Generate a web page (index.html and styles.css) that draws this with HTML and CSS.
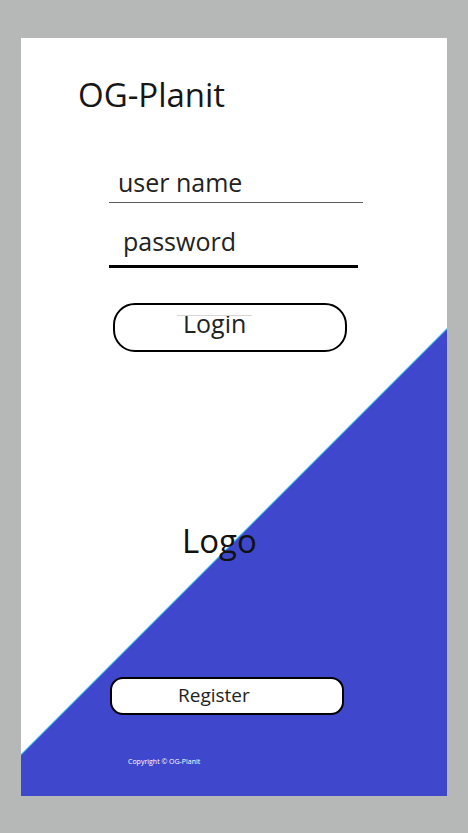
FILE: index.html
```html
<!DOCTYPE html>
<html>
<head>
<meta charset="utf-8">
<link rel="stylesheet" href="styles.css">
</head>
<body>
<div class="card">
  <div class="edge"></div>
  <div class="wedge"></div>
  <div class="content">
    <h1 class="title">OG-Planit</h1>
    <div class="field field-user">user name</div>
    <div class="field field-pass">password</div>
    <button class="btn btn-login"><span class="btn-label">Login</span></button>
    <div class="logo">Logo</div>
    <button class="btn btn-register"><span>Register</span></button>
    <div class="footer">Copyright &copy; OG-Planit</div>
  </div>
</div>
</body>
</html>
```
FILE: styles.css
```css
html, body {
  margin: 0;
  padding: 0;
}
body {
  background: #b6b8b7;
  width: 468px;
  height: 833px;
  font-family: "Open Sans", "Noto Sans", sans-serif;
  color: #1b1b1b;
}
.card {
  position: relative;
  margin: 38px 0 0 21px;
  width: 426px;
  height: 758px;
  background: #ffffff;
  overflow: hidden;
}
.edge {
  position: absolute;
  inset: 0;
  background: #38b4ea;
  clip-path: polygon(0 716px, 100% 290px, 100% 100%, 0 100%);
}
.wedge {
  position: absolute;
  inset: 0;
  background: #3f48cc;
  clip-path: polygon(0 717.5px, 100% 291.5px, 100% 100%, 0 100%);
}
.content {
  position: relative;
  z-index: 1;
  display: flex;
  flex-direction: column;
  align-items: flex-start;
}
.title {
  margin: 37px 0 0 57px;
  font-size: 33px;
  line-height: 40px;
  font-weight: 400;
  color: #161616;
}
.field {
  margin-left: 88px;
  font-size: 25px;
  line-height: 34px;
  color: #222;
  box-sizing: border-box;
}
.field-user {
  margin-top: 50px;
  width: 254px;
  padding: 0 0 3px 9px;
  border-bottom: 1px solid #5c5c5c;
}
.field-pass {
  margin-top: 21px;
  width: 249px;
  padding: 0 0 7px 14px;
  border-bottom: 3px solid #000;
}
.btn {
  box-sizing: border-box;
  background: #fff;
  border: 2px solid #000;
  font-family: "Open Sans", "Noto Sans", sans-serif;
  color: #222;
  text-align: left;
  cursor: pointer;
}
.btn-login {
  margin: 35px 0 0 92px;
  width: 234px;
  height: 49px;
  border-radius: 22px;
  padding: 4px 0 0 62px;
  font-size: 25px;
  line-height: 28px;
  align-self: flex-start;
  display: flex;
  align-items: flex-start;
}
.btn-label {
  position: relative;
  padding: 0 6px;
}
.btn-label::before {
  content: "";
  position: absolute;
  left: 0;
  right: 0;
  top: 6px;
  height: 1px;
  background: #d6d6d6;
}
.logo {
  margin: 169px 0 0 161px;
  font-size: 33px;
  line-height: 40px;
  color: #111;
}
.btn-register {
  margin: 116px 0 0 89px;
  width: 234px;
  height: 38px;
  border-radius: 13px;
  padding: 3px 0 0 66px;
  font-size: 19px;
  line-height: 26px;
  display: flex;
  align-items: flex-start;
}
.footer {
  margin: 42px 0 0 107px;
  font-size: 7px;
  line-height: 10px;
  color: #fff;
  letter-spacing: 0;
}
```
